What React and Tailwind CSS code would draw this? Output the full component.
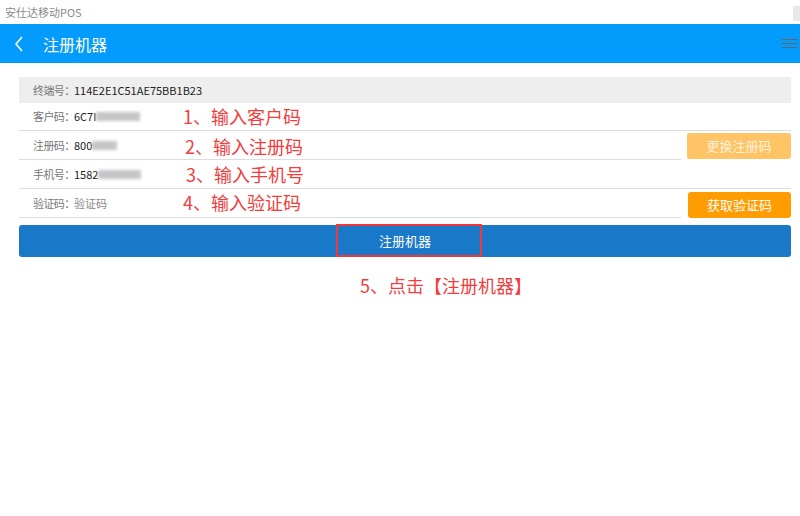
import React from 'react';

const cjk = { fontFamily: '"Microsoft YaHei", "Noto Sans CJK SC", "Noto Sans", sans-serif' };

// blurred-out part of a field value
const Masked = ({ w }) => (
  <span className="inline-block h-[9px] bg-[#b8b8b8] blur-[1.5px] opacity-80 align-middle" style={{ width: w }} />
);

const Note = ({ children, className = '' }) => (
  <span className={`absolute text-[18px] leading-none text-[#f23d3d] whitespace-nowrap ${className}`}>{children}</span>
);

const Field = ({ label, children }) => (
  <div className="flex items-center h-full pl-[14px] text-[11px]">
    <span className="text-[#777] w-[41px] shrink-0 whitespace-nowrap tracking-[-0.6px]">{label}</span>
    <span className="text-[#222] flex items-center whitespace-nowrap">{children}</span>
  </div>
);

export default function App() {
  return (
    <div className="w-[800px] h-[516px] bg-white overflow-hidden" style={cjk}>
      {/* window title */}
      <div className="h-[24px] flex items-center justify-between">
        <span className="pl-[5px] text-[11px] text-[#8a8a8a]">安仕达移动POS</span>
        <span className="w-[7px] h-[15px] bg-[#e8e8e8] mt-[3px]" />
      </div>

      {/* app header */}
      <div className="h-[39px] bg-[#039bfc] flex items-center">
        <svg className="ml-[14px] w-[10px] h-[16px]" viewBox="0 0 10 16" fill="none" stroke="#fff" strokeWidth="1.6">
          <path d="M8 1 L2 8 L8 15" />
        </svg>
        <span className="ml-[19px] text-[16px] text-white">注册机器</span>
        <div className="ml-auto mr-[2px] flex flex-col gap-[3px] w-[16px]">
          <span className="h-px bg-[#666]" />
          <span className="h-px bg-[#666]" />
          <span className="h-px bg-[#666]" />
        </div>
      </div>

      <div className="pl-[19px] pr-[9px] pt-[14px]">
        <div className="h-[26px] bg-[#eeeeee]">
          <Field label="终端号：">114E2E1C51AE75BB1B23</Field>
        </div>

        <div className="relative h-[28px] border-b border-[#dcdcdc]">
          <Field label="客户码：">6C7I<Masked w={44} /></Field>
          <Note className="left-[164px] top-[4px]">1、输入客户码</Note>
        </div>

        <div className="flex h-[29px] gap-[6px]">
          <div className="relative flex-1 border-b border-[#dcdcdc]">
            <Field label="注册码：">800<Masked w={25} /></Field>
            <Note className="left-[166px] top-[6px]">2、输入注册码</Note>
          </div>
          <button className="self-end w-[104px] h-[26px] mb-px rounded-[3px] bg-[#ffc466] text-[13px] text-[#fff1dc]">更换注册码</button>
        </div>

        <div className="relative h-[29px] border-b border-[#dcdcdc]">
          <Field label="手机号：">1582<Masked w={43} /></Field>
          <Note className="left-[167px] top-[5px]">3、输入手机号</Note>
        </div>

        <div className="flex h-[29px] gap-[7px]">
          <div className="relative flex-1 border-b border-[#dcdcdc]">
            <Field label="验证码："><span className="text-[#888]">验证码</span></Field>
            <Note className="left-[164px] top-[4px]">4、输入验证码</Note>
          </div>
          <button className="self-end w-[103px] h-[26px] rounded-[3px] bg-[#ff9c00] text-[13px] text-white">获取验证码</button>
        </div>

        <div className="relative mt-[7px] h-[32px] rounded-[3px] bg-[#1a78c8] flex items-center justify-center">
          <span className="text-[13px] text-white">注册机器</span>
          <span className="absolute left-[317px] -top-px w-[146px] h-[33px] border-2 border-[#f0383c]" />
        </div>

        <div className="mt-[15px] pl-[341px] text-[18px] text-[#f23d3d]">5、点击【注册机器】</div>
      </div>
    </div>
  );
}
